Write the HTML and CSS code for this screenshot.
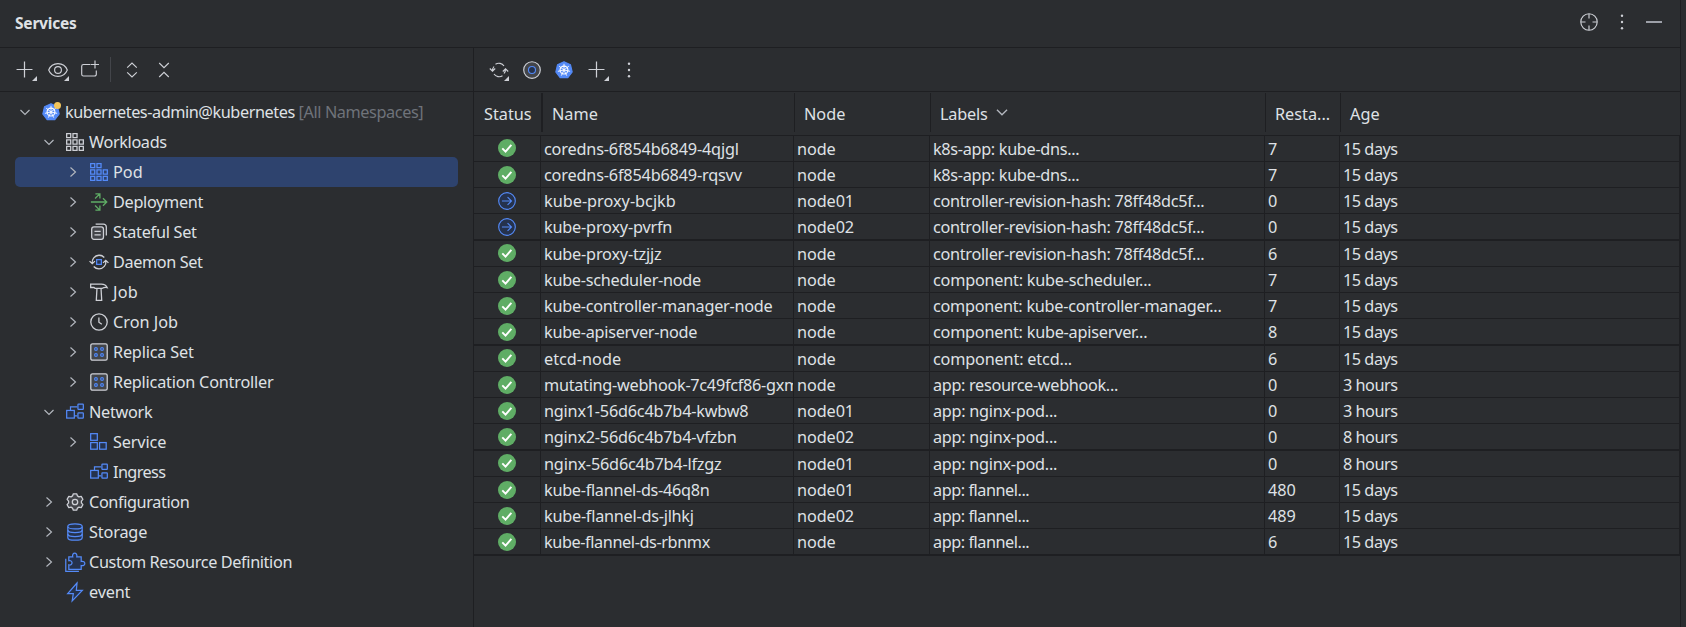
FILE: index.html
```
<!DOCTYPE html>
<html lang="en"><head><meta charset="utf-8"><title>Services</title><link rel="stylesheet" href="styles.css"></head>
<body>
<svg class="defs" width="0" height="0">
<defs>
<symbol id="right" viewBox="0 0 16 16"><path d="M5.5 3.5 10.5 8l-5 4.5" class="ln"/></symbol>
<symbol id="down" viewBox="0 0 16 16"><path d="M3.5 6 8 10.5 12.500 6" class="ln"/></symbol>
<symbol id="kube" viewBox="0 0 16 16"><path d="M8 .7 13.800 3.400 15.300 9.800 11.400 14.800H4.600L.7 9.800 2.200 3.400Z" fill="#548af7" stroke="#548af7" stroke-width="1" stroke-linejoin="round"/><circle cx="8" cy="8" r="3.500" fill="none" stroke="#fff"/><path d="M8 2.500V8M12.300 4.600 8 8M13.400 9.200 8 8M10.400 13 8 8M5.600 13 8 8M2.600 9.200 8 8M3.700 4.600 8 8" stroke="#fff" stroke-width=".8" fill="none"/></symbol>
<symbol id="pods" viewBox="0 0 16 16"><path d="M.6.6h3.600v3.600H.6zM6.200.6h3.600v3.600H6.200zM.6 6.200h3.600v3.600H.6zM6.200 6.200h3.600v3.600H6.200zM11.800 6.200h3.600v3.600h-3.600zM.6 11.800h3.600v3.600H.6zM6.200 11.800h3.600v3.600H6.200zM11.800 11.800h3.600v3.600h-3.600z" class="ln" fill-opacity="1"/></symbol>
<symbol id="ok" viewBox="0 0 16 16"><circle cx="8" cy="8" r="8" fill="#5fad65"/><path d="m3.800 8.300 2.900 2.900 5.200-6" fill="none" stroke="#fff" stroke-width="1.700"/></symbol>
<symbol id="run" viewBox="0 0 16 16"><circle cx="8" cy="8" r="7.400" fill="#25324d" stroke="#548af7"/><path d="M3.500 8h8.500M8.500 4.500 12 8l-3.500 3.500" fill="none" stroke="#548af7"/></symbol>
<symbol id="deploy" viewBox="0 0 16 16"><path d="M.8 8h14M11.500 4.700 14.900 8l-3.400 3.300M4.500 4.900 8.700.8M4.800.8h4v4M4.500 11.100l4.200 4.100M4.800 15.200h4v-4" class="ln"/></symbol>
<symbol id="stateful" viewBox="0 0 16 16"><path d="M5 1h7a2.500 2.500 0 0 1 2.500 2.500V11" class="ln"/><rect x="1.500" y="3.500" width="10.500" height="11" rx="2" class="ln gf"/><path d="M4 7.500h5.500M4 10.500h5.500" class="ln"/></symbol>
<symbol id="daemon" viewBox="1 0 16 16"><path d="M4.300 4.300A6.200 6.200 0 0 1 13.700 4M13.700 11.900A6.200 6.200 0 0 1 4.300 12M.6 7.200 3 9.500l2.400-2.300M3 9.300A6.200 6.200 0 0 1 4.300 4.300M12.600 8.800 15 6.500l2.400 2.300M15 6.700a6.200 6.200 0 0 1-1.300 5.200" class="ln"/><rect x="6.900" y="5.900" width="4.200" height="4.200" class="bl"/></symbol>
<symbol id="job" viewBox="0 0 16 16"><path d="M.6 1H10c2.500 0 4.500 1.200 5.300 3.200C13.500 3.600 12.500 3.800 11 4.700H4.500L3.500 4H.6zM6.200 4.700h3.600l.6 10.700H5.600z" class="ln"/></symbol>
<symbol id="clock" viewBox="0 0 16 16"><circle cx="8" cy="8" r="7.300" class="ln"/><path d="M7.900 4v4.200L10.500 10" class="ln"/></symbol>
<symbol id="replica" viewBox="0 0 16 16"><rect x=".7" y=".7" width="14.600" height="14.600" rx="1.500" class="ln gf"/><g class="bl"><circle cx="5.300" cy="5.300" r="1.200"/><circle cx="10.700" cy="5.300" r="1.200"/><circle cx="5.300" cy="10.700" r="1.200"/><circle cx="10.700" cy="10.700" r="1.200"/></g></symbol>
<symbol id="net" viewBox="0 0 16 16"><g class="bl"><path d="M4 6.500V3.500h6M7.500 11.500H10" fill="none"/><rect x=".6" y="6.600" width="6.800" height="6.800"/><rect x="10.600" y="1" width="4.800" height="4.600" rx=".5"/><rect x="10.600" y="8.800" width="4.800" height="4.600" rx=".5"/></g></symbol>
<symbol id="svc" viewBox="0 0 16 16"><g class="bl"><rect x=".6" y=".6" width="5.900" height="5.900"/><rect x=".6" y="8.500" width="5.900" height="5.900"/><rect x="8.500" y="8.500" width="5.900" height="5.900"/></g></symbol>
<symbol id="gear" viewBox="0 0 16 16"><path d="M6.500.7h3l.7 1.900 1.300.8 2-.4 1.500 2.600L13.700 7.200v1.600L15 10.400 13.500 13l-2-.4-1.300.8-.7 1.900h-3l-.7-1.900-1.300-.8-2 .4L1 10.400l1.300-1.600V7.200L1 5.600 2.500 3l2 .4 1.300-.8z" class="ln gf" stroke-linejoin="round"/><circle cx="8" cy="8" r="2.400" class="ln"/></symbol>
<symbol id="db" viewBox="0 0 16 16"><g class="bl"><path d="M1.600 3v10c0 3.100 12.800 3.100 12.800 0V3"/><ellipse cx="8" cy="3" rx="6.400" ry="2.300"/><path d="M1.600 6.300c0 3.100 12.800 3.100 12.800 0M1.600 9.700c0 3.100 12.800 3.100 12.800 0" fill="none"/></g></symbol>
<symbol id="puzzle" viewBox="1 1 16 16"><g class="bl"><path d="M3.500 4.500H7c-1.200-4.500 4.600-4.500 3.600 0h3.900v4c4.300-1 4.300 4.700 0 3.700v3.300h-11v-4c3.800 1.200 3.800-4.600 0-3.600z"/><path d="M.8 6v11.400H12.500" fill="none"/></g></symbol>
<symbol id="bolt" viewBox="0 1 16 16"><path d="M9.800 1 1.500 10.500h5L5.500 17l9-9.500H9.200z" class="bl"/></symbol>
<symbol id="plus" viewBox="0 0 16 16"><path d="M8 .5v15M.5 8h15" class="ln"/></symbol>
<symbol id="eye" viewBox="0 0 20 16"><path d="M.7 8C4-.5 16-.5 19.300 8 16 16.500 4 16.500.7 8z" class="ln"/><circle cx="10" cy="8" r="3.400" class="ln"/></symbol>
<symbol id="newtab" viewBox="0 0 18 18"><path d="M9.500 4.500h-7a1.800 1.800 0 0 0-1.800 1.800v7.900A1.800 1.800 0 0 0 2.500 16h11a1.800 1.800 0 0 0 1.800-1.800V10.500M14 .5v8M10 4.500h8" class="ln"/></symbol>
<symbol id="expand" viewBox="0 0 12 16"><path d="M1.200 5.600 6 1l4.800 4.600M1.200 10.400 6 15l4.800-4.600" class="ln"/></symbol>
<symbol id="collapse" viewBox="0 0 12 16"><path d="M1.200 1 6 5.600 10.800 1M1.200 15 6 10.400l4.800 4.600" class="ln"/></symbol>
<symbol id="sync" viewBox="0 0 20 16"><path d="M6.500 2.200A6.300 6.300 0 0 1 15 4M13.500 13.800A6.300 6.300 0 0 1 5 12M.8 6.500 3.500 9.200 6.200 6.500M3.500 9A6.300 6.300 0 0 1 5 4.500M13.800 9.500 16.500 6.800 19.200 9.500M16.500 7A6.300 6.300 0 0 1 15 11.500" class="ln"/></symbol>
<symbol id="ring" viewBox="0 0 18 18"><circle cx="9" cy="9" r="8.300" class="ln gf"/><circle cx="9" cy="9" r="3.500" class="bl"/></symbol>
<symbol id="target" viewBox="0 0 18 18"><circle cx="9" cy="9" r="8.200" class="ln"/><path d="M9 1v4.500M9 12.500V17M1 9h4.500M12.500 9H17" class="ln"/></symbol>
<symbol id="dots" viewBox="0 0 4 16"><circle cx="2" cy="1.800" r="1.200" fill="#ced0d6"/><circle cx="2" cy="8" r="1.200" fill="#ced0d6"/><circle cx="2" cy="14.200" r="1.200" fill="#ced0d6"/></symbol>
</defs></svg>
<div class="window">
<header class="title"><h1>Services</h1><svg class="i18 t1"><use href="#target"/></svg><svg class="dots t2"><use href="#dots"/></svg><i class="minus"></i></header>
<div class="split">
<aside>
<div class="bar lbar"><span class="drop plus"><svg><use href="#plus"/></svg></span><span class="drop eye"><svg><use href="#eye"/></svg></span><svg class="newtab"><use href="#newtab"/></svg><i class="sep"></i><svg class="exp"><use href="#expand"/></svg><svg class="exp col"><use href="#collapse"/></svg></div>
<ul class="tree" id="tree"></ul>
</aside>
<main>
<div class="bar rbar"><span class="drop sync"><svg><use href="#sync"/></svg></span><svg class="i18 ring"><use href="#ring"/></svg><svg class="i18 kb"><use href="#kube"/></svg><span class="drop plus"><svg><use href="#plus"/></svg></span><svg class="dots"><use href="#dots"/></svg></div>
<div class="grid head"><span>Status</span><span>Name</span><span>Node</span><span class="labels">Labels <svg class="sort"><use href="#down"/></svg></span><span>Resta...</span><span>Age</span></div>
<div id="rows"></div>
</main>
</div></div>
<script src="app.js"></script>
</body></html>
```
FILE: styles.css
```
*{box-sizing:border-box}
body{margin:0;background:#2b2d30;color:#dfe1e5;font:16.25px/26px "Noto Sans","Open Sans",sans-serif;overflow:hidden}
.defs{position:absolute}
svg{display:block;flex:none;color:#ced0d6;overflow:visible}
symbol{overflow:visible}
.ln{fill:none;stroke:currentColor;stroke-width:1.15}
.gf{fill:#43454a}
.bl{fill:#25324d;stroke:#548af7;stroke-width:1.1}
.window{width:1681px;height:627px;border-right:1px solid #1e1f22;display:flex;flex-direction:column}
.title{height:48px;border-bottom:1px solid #1e1f22;display:flex;align-items:center;padding:0 18px 3px 15px}
h1{margin:0;font-size:15.5px;font-weight:700;letter-spacing:-.2px;flex:1;padding-top:1px}
.i18{width:18px;height:18px}
.t1{margin-right:22px}
.dots{width:4px;height:16px}
.t2{margin-right:22px}
.minus{width:16px;height:2px;background:#9da0a8}
.split{display:flex;flex:1}
aside{width:474px;border-right:1px solid #1e1f22}
main{flex:1;min-width:0}
.bar{height:44px;border-bottom:1px solid #1e1f22;display:flex;align-items:center}
.lbar{padding-left:16px}
.rbar{padding-left:15px}
.drop{position:relative}
.drop::after{content:"";position:absolute;right:-4px;bottom:-3px;border-left:5px solid transparent;border-bottom:5px solid #ced0d6}
.plus svg{width:17px;height:17px}
.eye{margin-left:15px}
.eye::after{right:-1px}
.eye svg{width:20px;height:16px}
.newtab{width:18px;height:18px;margin:-2px 0 0 13px}
.sep{width:1px;height:25px;background:#43454a;margin:0 15px 0 11px}
.exp{width:12px;height:16px}
.col{margin-left:20px}
.sync svg{width:20px;height:16px}
.sync::after{right:0}
.ring{margin-left:14px}
.kb{margin:0 15px 0 14px}
.rbar .dots{margin-left:22px}
.tree{list-style:none;margin:0;padding:5px 15px}
.tree li{height:30px;border-radius:5px;display:flex;align-items:center;white-space:pre}
.tree li.on{background:#2e436e}
.arrow{width:16px;height:16px;color:#b4b8bf;margin-right:9px}
.ic{width:18px;height:18px;margin-right:5px}
.badge{position:relative}
.badge::after{content:"";position:absolute;width:7px;height:7px;border-radius:50%;background:#f2c55c;right:4px;top:-1px}
.blue{color:#548af7}.green{color:#5fad65}
.muted{color:#6f737a;letter-spacing:-.4px}
.grid{display:grid;grid-template-columns:67px 253px 136px 335px 75px 1fr}
.grid span{white-space:nowrap;overflow:hidden;border-right:1px solid #1e1f22;padding-left:3px}
.head{height:44px;border-bottom:1px solid #1e1f22;padding-top:1px;padding-bottom:3px;grid-template-columns:69px 252px 136px 335px 75px 1fr}
.head span{display:flex;align-items:center;padding:2px 0 0 9px}
.head span:first-child{border-right-width:2px;padding-left:10px}
.head span:last-child{border:0}
.head .labels{letter-spacing:-.2px}
.sort{width:18px;height:18px;margin:-4px 0 0 5px;color:#b4b8bf}
.row{height:26px;border-bottom:1px solid #1e1f22}
.row:nth-child(4n){height:27px;border-bottom-width:2px}
.row svg{width:18px;height:18px;margin:4px 0 0 21px}
.row:nth-child(4n+1) svg{margin-top:3px}
```
FILE: app.js
```
// depth, arrow, icon, text, tracking, icon colour
const tree = [
  [0,'down','kube','kubernetes-admin@kubernetes',-.44],
  [1,'down','pods','Workloads',-.36],
  [2,'right','pods','Pod',0,'blue'],
  [2,'right','deploy','Deployment',-.32,'green'],
  [2,'right','stateful','Stateful Set',-.27],
  [2,'right','daemon','Daemon Set',-.4],
  [2,'right','job','Job',.2],
  [2,'right','clock','Cron Job',0],
  [2,'right','replica','Replica Set',-.2],
  [2,'right','replica','Replication Controller',-.22],
  [1,'down','net','Network',-.3],
  [2,'right','svc','Service',-.15],
  [2,'','net','Ingress',-.6],
  [1,'right','gear','Configuration',-.39],
  [1,'right','db','Storage',-.15],
  [1,'right','puzzle','Custom Resource Definition',-.37],
  [1,'','bolt','event',-.2]
];
document.getElementById('tree').innerHTML = tree.map(([d, a, i, t, ls, c]) =>
  `<li class="${t === 'Pod' ? 'on' : ''}" style="padding-left:${2 + d * 24}px"><svg class="arrow">${a ? `<use href="#${a}"/>` : ''}</svg><span class="${d ? '' : 'badge'}"><svg class="ic ${c || ''}"><use href="#${i}"/></svg></span><span class="label" style="letter-spacing:${ls}px">${t}</span>${d ? '' : '<span class="muted"> [All Namespaces]</span>'}</li>`).join('');
const h = 'controller-revision-hash: 78ff48dc5f...';
// name, node, labels, restarts, age, tracking of name, tracking of labels, icon
const rows = [
  ['coredns-6f854b6849-4qjgl','node','k8s-app: kube-dns...','7','15 days',-.18,-.32],
  ['coredns-6f854b6849-rqsvv','node','k8s-app: kube-dns...','7','15 days',-.18,-.32],
  ['kube-proxy-bcjkb','node01',h,'0','15 days',0,-.31,'run'],
  ['kube-proxy-pvrfn','node02',h,'0','15 days',-.2,-.31,'run'],
  ['kube-proxy-tzjjz','node',h,'6','15 days',-.2,-.31],
  ['kube-scheduler-node','node','component: kube-scheduler...','7','15 days',-.28,-.23],
  ['kube-controller-manager-node','node','component: kube-controller-manager...','7','15 days',-.27,-.27],
  ['kube-apiserver-node','node','component: kube-apiserver...','8','15 days',-.28,-.24],
  ['etcd-node','node','component: etcd...','6','15 days',0,-.18],
  ['mutating-webhook-7c49fcf86-gxm','node','app: resource-webhook...','0','3 hours',-.28,-.33],
  ['nginx1-56d6c4b7b4-kwbw8','node01','app: nginx-pod...','0','3 hours',-.22,-.27],
  ['nginx2-56d6c4b7b4-vfzbn','node02','app: nginx-pod...','0','8 hours',-.22,-.27],
  ['nginx-56d6c4b7b4-lfzgz','node01','app: nginx-pod...','0','8 hours',-.2,-.27],
  ['kube-flannel-ds-46q8n','node01','app: flannel...','480','15 days',-.29,-.46],
  ['kube-flannel-ds-jlhkj','node02','app: flannel...','489','15 days',-.25,-.46],
  ['kube-flannel-ds-rbnmx','node','app: flannel...','6','15 days',-.4,-.46]
];
document.getElementById('rows').innerHTML = rows.map(r => {
  const ls = [r[5], -.1, r[6], 0, -.48];
  return `<div class="grid row"><span><svg><use href="#${r[7] || 'ok'}"/></svg></span>${r.slice(0, 5).map((c, i) => `<span style="letter-spacing:${ls[i]}px">${c}</span>`).join('')}</div>`;
}).join('');
```
